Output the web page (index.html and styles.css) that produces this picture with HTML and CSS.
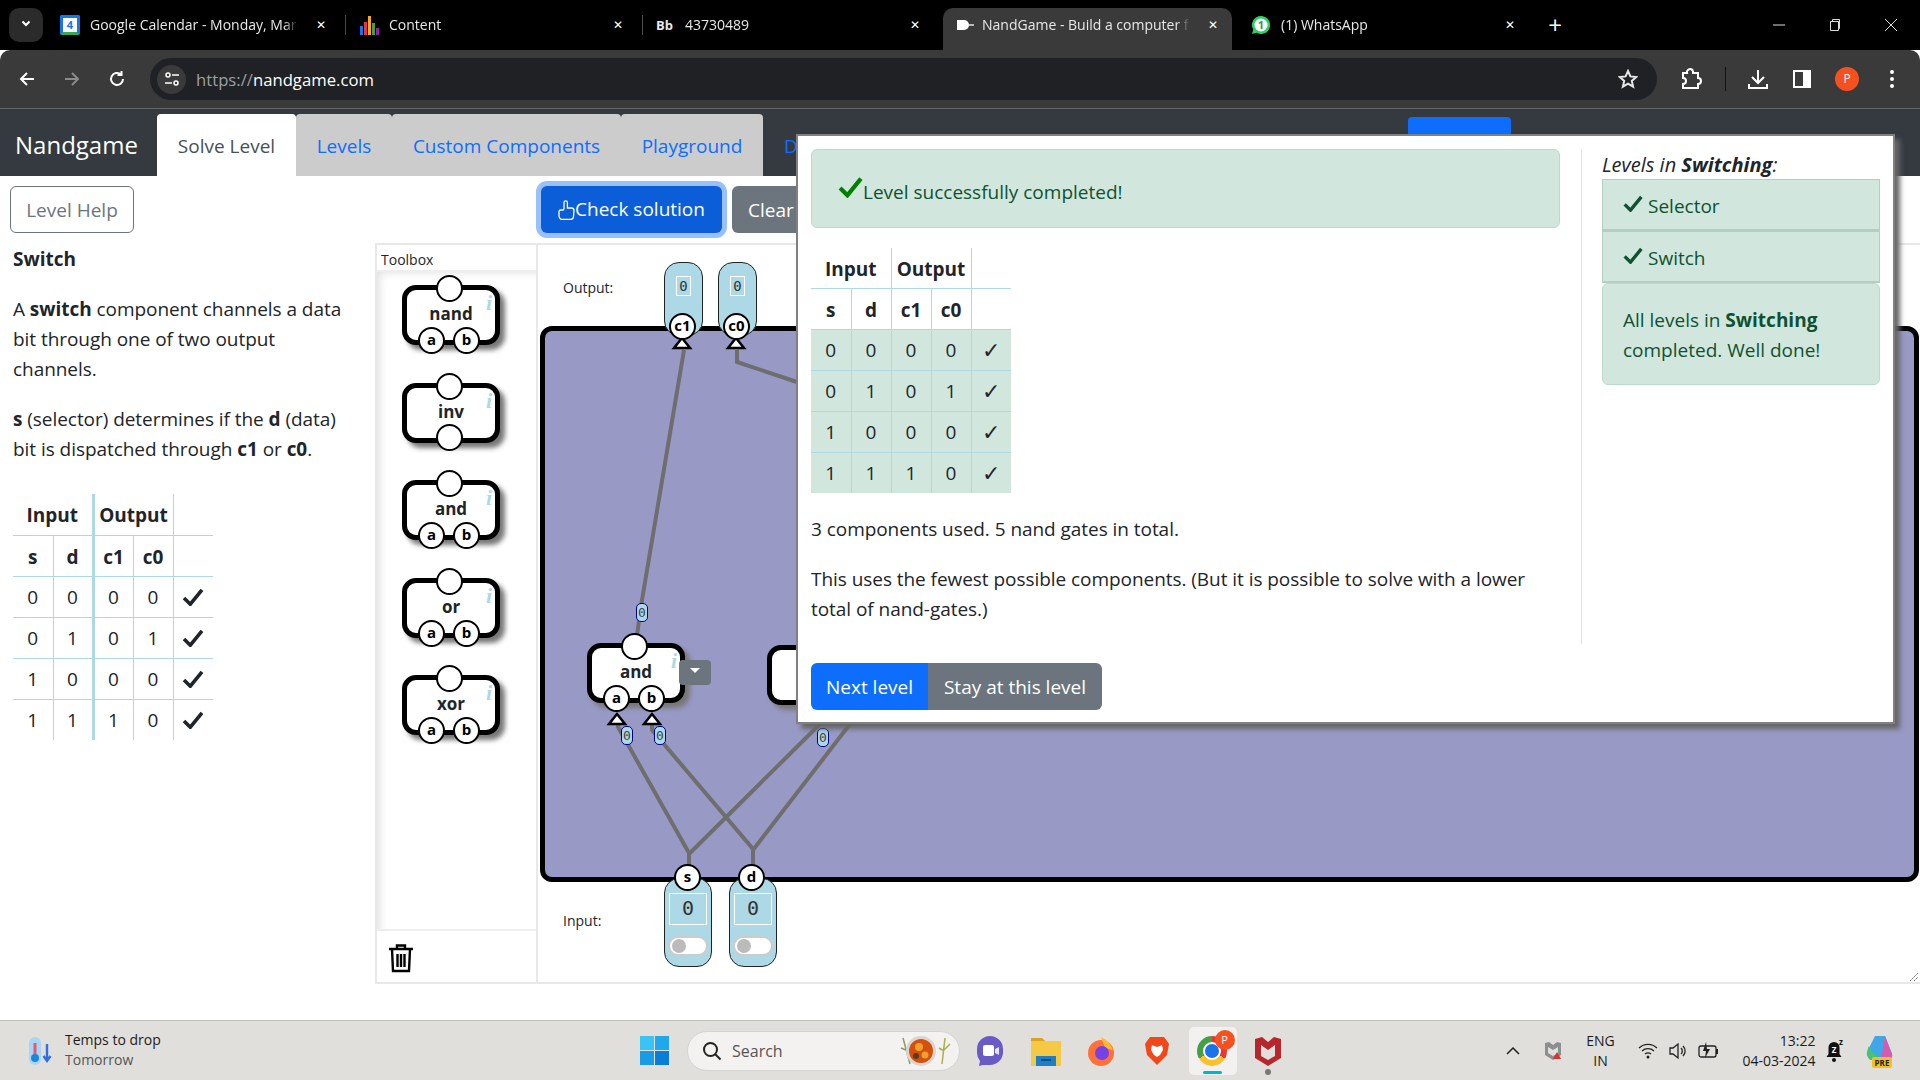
FILE: index.html
```html
<!DOCTYPE html>
<html lang="en">
<head>
    <meta charset="UTF-8">
    <title>NandGame - Build a computer from scratch</title>
    <link rel="stylesheet" href="styles.css">
</head>
<body>
<svg class="defs" width="0" height="0">
    <symbol id="tick" viewBox="0 0 24 20"><path d="M2 11l7 7L22 2" fill="none" stroke="currentColor" stroke-width="4"/></symbol>
</svg>

<div class="tabstrip">
    <button class="tab-menu"><svg width="14" height="14" viewBox="0 0 14 14"><path d="M3.5 5.5L7 9l3.5-3.5" fill="none" stroke="#fff" stroke-width="2"/></svg></button>
    <div class="tab">
        <span class="fav fav-cal">4</span><span class="tab-title">Google Calendar - Monday, March 4</span><span class="tab-x">✕</span>
    </div>
    <div class="tab sep">
        <svg class="fav" viewBox="0 0 20 20"><rect x="1" y="11" width="3" height="9" fill="#1a73e8"/><rect x="5" y="7" width="3" height="13" fill="#e53935"/><rect x="9" y="1" width="3" height="19" fill="#f9a825"/><rect x="13" y="8" width="3" height="12" fill="#43a047"/><rect x="17" y="13" width="3" height="7" fill="#8e24aa"/></svg>
        <span class="tab-title">Content</span><span class="tab-x">✕</span>
    </div>
    <div class="tab sep">
        <span class="fav fav-bb">Bb</span><span class="tab-title">43730489</span><span class="tab-x">✕</span>
    </div>
    <div class="tab active">
        <svg class="fav" viewBox="0 0 20 20"><path d="M2 5h7a5 5 0 010 10H2z" fill="#fff"/><path d="M14 10h5" stroke="#bbb" stroke-width="2"/></svg>
        <span class="tab-title">NandGame - Build a computer from scratch</span><span class="tab-x">✕</span>
    </div>
    <div class="tab last">
        <svg class="fav" viewBox="0 0 20 20"><path d="M10 1a9 9 0 00-7.700 13.600L1 19l4.600-1.200A9 9 0 1010 1z" fill="#25d366"/><circle cx="10" cy="10" r="6.500" fill="#fff"/><text x="10" y="14" text-anchor="middle" class="fav-num">1</text></svg>
        <span class="tab-title">(1) WhatsApp</span><span class="tab-x">✕</span>
    </div>
    <span class="newtab">+</span>
    <div class="winctl">
        <svg width="14" height="14" viewBox="0 0 14 14"><path d="M1 7h12" stroke="#ddd"/></svg>
        <svg width="14" height="14" viewBox="0 0 14 14"><path d="M2.500 3.500h8v9h-8zM4.500 3.500v-2h7v9h-1" fill="none" stroke="#ddd"/></svg>
        <svg width="14" height="14" viewBox="0 0 14 14"><path d="M1 1l12 12M13 1L1 13" stroke="#ddd"/></svg>
    </div>
</div>

<div class="toolbar">
    <svg class="tb-nav" viewBox="0 0 18 18"><path d="M16 9H3M9 3L3 9l6 6" fill="none" stroke="#fff" stroke-width="2"/></svg>
    <svg class="tb-nav" viewBox="0 0 18 18"><path d="M2 9h13M9 3l6 6-6 6" fill="none" stroke="#8a8a8a" stroke-width="2"/></svg>
    <svg class="tb-nav" viewBox="0 0 18 18"><path d="M15 9a6 6 0 11-2-4.500M13.500 1v4h-4" fill="none" stroke="#fff" stroke-width="2"/></svg>
    <div class="omnibox">
        <span class="site-info"><svg width="16" height="16" viewBox="0 0 16 16"><circle cx="4" cy="4" r="2" fill="none" stroke="#fff" stroke-width="1.500"/><path d="M8 4h7M1 12h7" stroke="#fff" stroke-width="1.500"/><circle cx="12" cy="12" r="2" fill="none" stroke="#fff" stroke-width="1.500"/></svg></span>
        <span class="url"><span class="url-scheme">https://</span>nandgame.com</span>
        <svg class="star" width="20" height="20" viewBox="0 0 20 20"><path d="M10 2l2.400 5.400 5.800.6-4.400 3.900 1.300 5.700L10 14.600l-5.100 3 1.300-5.700L1.800 8l5.800-.6z" fill="none" stroke="#e8e8e8" stroke-width="2"/></svg>
    </div>
    <div class="tb-right">
        <svg class="ext" width="22" height="24" viewBox="0 0 22 24"><path d="M3 6h4a3 3 0 016-1.500V6h5v5a3 3 0 010 6v4H3v-4a3 3 0 000-6z" fill="none" stroke="#fff" stroke-width="2"/></svg>
        <span class="tb-sep"></span>
        <svg class="dl" width="22" height="24" viewBox="0 0 22 24"><path d="M11 3v12M5 10l6 6 6-6M2 17v4h18v-4" fill="none" stroke="#fff" stroke-width="2"/></svg>
        <svg class="panel" width="18" height="18" viewBox="0 0 18 18"><rect x="1" y="1" width="16" height="16" fill="none" stroke="#fff" stroke-width="2"/><rect x="10" y="1" width="7" height="16" fill="#fff"/></svg>
        <span class="avatar">P</span>
        <svg class="kebab" width="6" height="20" viewBox="0 0 6 20"><circle cx="3" cy="3" r="2" fill="#fff"/><circle cx="3" cy="10" r="2" fill="#fff"/><circle cx="3" cy="17" r="2" fill="#fff"/></svg>
    </div>
</div>

<nav class="navbar">
    <a class="brand">Nandgame</a>
    <ul class="nav-tabs">
        <li class="nav-tab current solve">Solve Level</li>
        <li class="nav-tab levels">Levels</li>
        <li class="nav-tab custom">Custom Components</li>
        <li class="nav-tab play">Playground</li>
    </ul>
    <a class="nav-link">Donate</a>
    <span class="nav-blue"></span>
</nav>

<main class="page">
    <aside class="intro">
        <button class="btn btn-outline">Level Help</button>
        <h4>Switch</h4>
        <p>A <b>switch</b> component channels a data bit through one of two output channels.</p>
        <p><b>s</b> (selector) determines if the <b>d</b> (data) bit is dispatched through <b>c1</b> or <b>c0</b>.</p>
        <table class="truth truth-intro">
            <tr><th colspan="2">Input</th><th colspan="2" class="thick">Output</th><th class="blank"></th></tr>
            <tr><th>s</th><th>d</th><th class="thick">c1</th><th>c0</th><th></th></tr>
            <tr><td>0</td><td>0</td><td class="thick">0</td><td>0</td><td><svg class="tick"><use href="#tick"/></svg></td></tr>
            <tr><td>0</td><td>1</td><td class="thick">0</td><td>1</td><td><svg class="tick"><use href="#tick"/></svg></td></tr>
            <tr><td>1</td><td>0</td><td class="thick">0</td><td>0</td><td><svg class="tick"><use href="#tick"/></svg></td></tr>
            <tr><td>1</td><td>1</td><td class="thick">1</td><td>0</td><td><svg class="tick"><use href="#tick"/></svg></td></tr>
        </table>
    </aside>

    <section class="work">
        <div class="actions">
            <button class="btn btn-check">
                <svg width="17" height="20" viewBox="0 0 17 20"><path d="M1 11.500c0-1 1-1.500 2-1.500h2l1-1V2.500a1.700 1.700 0 013.400 0V8h4c1.500 0 2.600 1 2.600 2.500l-.5 6c-.1 1.800-1.500 3-3 3H5c-2.500 0-4-1.500-4-4z" fill="none" stroke="#fff" stroke-width="1.300"/></svg>Check solution
            </button>
            <button class="btn btn-clear">Clear</button>
        </div>

        <div class="workspace">
            <div class="toolbox">
                <div class="toolbox-head">Toolbox</div>
                <div class="toolbox-list">
                    <div class="gate"><span class="pin pin-top"></span><span class="gate-name">nand</span><i class="gate-info">i</i><span class="pin pin-a">a</span><span class="pin pin-b">b</span></div>
                    <div class="gate"><span class="pin pin-top"></span><span class="gate-name">inv</span><i class="gate-info">i</i><span class="pin pin-bottom"></span></div>
                    <div class="gate"><span class="pin pin-top"></span><span class="gate-name">and</span><i class="gate-info">i</i><span class="pin pin-a">a</span><span class="pin pin-b">b</span></div>
                    <div class="gate"><span class="pin pin-top"></span><span class="gate-name">or</span><i class="gate-info">i</i><span class="pin pin-a">a</span><span class="pin pin-b">b</span></div>
                    <div class="gate"><span class="pin pin-top"></span><span class="gate-name">xor</span><i class="gate-info">i</i><span class="pin pin-a">a</span><span class="pin pin-b">b</span></div>
                </div>
                <div class="toolbox-foot">
                    <svg width="26" height="30" viewBox="0 0 26 30"><path d="M1 6h24M9 5V2.500h8V5M4 6l1 22h16l1-22M9.500 11v13M13 11v13M16.500 11v13" fill="none" stroke="#000" stroke-width="2.400"/></svg>
                </div>
            </div>

            <div class="canvas">
                <span class="canvas-label label-output">Output:</span>
                <span class="canvas-label label-input">Input:</span>
                <div class="board"></div>

                <svg class="wires" viewBox="538 243 1382 741">
                    <g fill="none" stroke="#6e6e6e" stroke-width="4">
                        <path d="M684 350L640 612l-4 32"/>
                        <path d="M737 350v12l60 20"/>
                        <path d="M618 724v3l71 126v20"/>
                        <path d="M652 724v6l101 119v24"/>
                        <path d="M689 854L820 724"/>
                        <path d="M753 850L850 724"/>
                    </g>
                    <g fill="#fff" stroke="#000" stroke-width="2.500">
                        <path d="M682 338l8 10h-16z"/>
                        <path d="M736 338l8 10h-16z"/>
                        <path d="M617 714l8 10h-16z"/>
                        <path d="M652 714l8 10h-16z"/>
                    </g>
                </svg>

                <div class="capsule out-c1"><span class="value">0</span></div>
                <div class="capsule out-c0"><span class="value">0</span></div>
                <span class="pin board-pin at-c1">c1</span>
                <span class="pin board-pin at-c0">c0</span>

                <span class="pill pill-1">0</span>
                <span class="pill pill-2">0</span>
                <span class="pill pill-3">0</span>
                <span class="pill pill-4">0</span>

                <div class="gate gate-and"><span class="pin pin-top"></span><span class="gate-name">and</span><i class="gate-info">i</i><span class="pin pin-a">a</span><span class="pin pin-b">b</span></div>
                <button class="gate-menu"></button>
                <div class="gate gate-other"></div>

                <div class="capsule in-s"><span class="value">0</span><span class="toggle"></span></div>
                <div class="capsule in-d"><span class="value">0</span><span class="toggle"></span></div>
                <span class="pin board-pin at-s">s</span>
                <span class="pin board-pin at-d">d</span>

                <svg class="resize" width="10" height="10" viewBox="0 0 10 10"><path d="M1 9l8-8M5 9l4-4" stroke="#666" stroke-dasharray="2 1"/></svg>
            </div>
        </div>
    </section>
</main>

<div class="popup">
    <div class="popup-body">
        <div class="popup-main">
            <div class="alert alert-done"><svg class="done-tick"><use href="#tick"/></svg>Level successfully completed!</div>
            <table class="truth truth-result">
                <tr><th colspan="2">Input</th><th colspan="2">Output</th><th></th></tr>
                <tr><th>s</th><th>d</th><th>c1</th><th>c0</th><th></th></tr>
                <tr class="ok"><td>0</td><td>0</td><td>0</td><td>0</td><td class="mark">✓</td></tr>
                <tr class="ok"><td>0</td><td>1</td><td>0</td><td>1</td><td class="mark">✓</td></tr>
                <tr class="ok"><td>1</td><td>0</td><td>0</td><td>0</td><td class="mark">✓</td></tr>
                <tr class="ok"><td>1</td><td>1</td><td>1</td><td>0</td><td class="mark">✓</td></tr>
            </table>
            <p>3 components used. 5 nand gates in total.</p>
            <p>This uses the fewest possible components. (But it is possible to solve with a lower total of nand-gates.)</p>
        </div>
        <div class="popup-side">
            <div class="side-title"><i>Levels in <b>Switching</b>:</i></div>
            <ul class="level-list">
                <li><svg class="list-tick"><use href="#tick"/></svg>Selector</li>
                <li><svg class="list-tick"><use href="#tick"/></svg>Switch</li>
            </ul>
            <div class="alert alert-side">All levels in <b>Switching</b> completed. Well done!</div>
        </div>
    </div>
    <div class="btn-group">
        <button class="btn btn-next">Next level</button><button class="btn btn-stay">Stay at this level</button>
    </div>
</div>

<footer class="taskbar">
    <div class="weather">
        <svg width="24" height="30" viewBox="0 0 24 30"><rect x="1" y="1" width="12" height="28" rx="6" fill="#a9d6f5"/><rect x="5.500" y="7" width="3" height="14" fill="#e8576a"/><circle cx="7" cy="22" r="4" fill="#1e88d8"/><path d="M19 8v16M15.500 20l3.500 5 3.500-5" fill="none" stroke="#2f6fe0" stroke-width="2.400"/></svg>
        <div class="weather-text"><span>Temps to drop</span><span class="weather-sub">Tomorrow</span></div>
    </div>
    <svg class="winlogo" width="29" height="29" viewBox="0 0 29 29"><path d="M0 0h14v14H0z" fill="#3ac4f5"/><path d="M15 0h14v14H15z" fill="#1fa8ec"/><path d="M0 15h14v14H0z" fill="#1a9be6"/><path d="M15 15h14v14H15z" fill="#0a7ed6"/></svg>
    <div class="searchbox">
        <svg width="20" height="20" viewBox="0 0 20 20"><circle cx="8.500" cy="8.500" r="6.500" fill="none" stroke="#222" stroke-width="2"/><path d="M13 13l5.500 5.500" stroke="#222" stroke-width="2"/></svg>
        <span class="search-word">Search</span>
        <svg class="search-art" width="58" height="34" viewBox="0 0 58 34"><path d="M6 4l7 26M4 14l5 2M14 10l-3 6" stroke="#8d9a6a" stroke-width="1.500"/><circle cx="24" cy="17" r="15" fill="#d9d6d0"/><circle cx="24" cy="17" r="12" fill="#d3500f"/><circle cx="22" cy="13" r="4" fill="#f0a030"/><circle cx="28" cy="21" r="3.500" fill="#f0a030"/><circle cx="19" cy="22" r="3" fill="#5a3a20"/><path d="M48 4l-3 26M42 14l5 3M53 10l-6 6" stroke="#a8b050" stroke-width="1.500"/></svg>
    </div>
    <div class="tray-apps">
        <span class="app-slot"><svg width="28" height="32" viewBox="0 0 28 32"><path d="M14 1a13 13 0 0113 13v4a13 13 0 01-13 12H7l-4 1 1-5a13 13 0 01-3-8v-4A13 13 0 0114 1z" fill="#6a5ac6"/><rect x="7" y="10" width="11" height="11" rx="2" fill="#fff"/><path d="M19 14l4-2v8l-4-2z" fill="#e6e2fa"/></svg></span>
        <span class="app-slot"><svg width="30" height="30" viewBox="0 0 30 30"><path d="M0 2h11l3 3h16v25H0z" fill="#f6c945"/><path d="M0 2h11l3 3H0z" fill="#d9a520"/><rect x="5" y="20" width="20" height="10" fill="#1f7fc4"/><rect x="10" y="23" width="10" height="2" fill="#0b4f85"/></svg></span>
        <span class="app-slot"><svg width="28" height="30" viewBox="0 0 28 30"><circle cx="14" cy="17" r="13" fill="#ff7139"/><path d="M14 1c6 3 10 8 12 13l-8-2z" fill="#ffbd2e"/><circle cx="15" cy="17" r="7" fill="#7542e5"/></svg></span>
        <span class="app-slot"><svg width="26" height="30" viewBox="0 0 26 30"><path d="M6 1h14l3 4 2 3-2 11-10 10L3 19 1 8l2-3z" fill="#f1481b"/><path d="M8 9l5 2 5-2 1 5-3 5-3 2-3-2-3-5z" fill="#fff"/></svg></span>
        <span class="app-slot chrome-slot"><span class="chrome-ico"><span class="chrome-core"></span></span><span class="chrome-badge">P</span><span class="run-line"></span></span>
        <span class="app-slot"><svg width="26" height="30" viewBox="0 0 26 30"><path d="M0 3l7-2 6 5 6-5 7 2v19l-13 8-13-8z" fill="#b5272c"/><path d="M6 9l7 5 7-5v11l-7 4-7-4z" fill="#e0dfdc"/></svg><span class="run-dot"></span></span>
    </div>
    <div class="tray">
        <svg class="tray-chev" width="14" height="8" viewBox="0 0 14 8"><path d="M1 7l6-6 6 6" fill="none" stroke="#222" stroke-width="1.500"/></svg>
        <svg class="tray-shield" width="18" height="20" viewBox="0 0 18 20"><path d="M1 2l4-1 4 3 4-3 4 1v12l-8 5-8-5z" fill="#8b8f90"/><path d="M4 6l5 3 5-3v6l-5 3-5-3z" fill="#e0dfdc"/><path d="M13 11l4 7H9z" fill="#d93030"/></svg>
        <div class="tray-lang">ENG<br>IN</div>
        <svg class="tray-ico" width="20" height="20" viewBox="0 0 20 20"><path d="M1 7a13 13 0 0118 0M4 10a9 9 0 0112 0M7 13a5 5 0 016 0" fill="none" stroke="#222" stroke-width="1.300"/><circle cx="10" cy="16" r="1.500" fill="#222"/></svg>
        <svg class="tray-ico" width="20" height="20" viewBox="0 0 20 20"><path d="M2 7h3l5-4v14l-5-4H2z" fill="none" stroke="#222" stroke-width="1.300"/><path d="M13 7a4 4 0 010 6M15 5a7 7 0 010 10" fill="none" stroke="#222" stroke-width="1.300"/></svg>
        <svg class="tray-ico" width="22" height="20" viewBox="0 0 22 20"><rect x="1" y="5" width="17" height="11" rx="2" fill="none" stroke="#222" stroke-width="1.300"/><rect x="18" y="8" width="2" height="5" fill="#222"/><path d="M8 1L5 10h3l-1 7 5-9H9z" fill="#222"/></svg>
        <div class="tray-clock">13:22<br>04-03-2024</div>
        <svg class="tray-bell" width="18" height="24" viewBox="0 0 18 24"><path d="M8 3a5.500 5.500 0 015.500 5.500V15l2 3H.5l2-3V8.500A5.500 5.500 0 018 3z" fill="#111"/><circle cx="8" cy="21" r="2" fill="#111"/><text x="8" y="14" text-anchor="middle" class="bell-z bell-z-in">Z</text><text x="15" y="6" text-anchor="middle" class="bell-z">z</text></svg>
        <svg class="tray-copilot" width="30" height="34" viewBox="0 0 30 34"><path d="M11 2h10l7 18c1 4-2 6-5 6H10C5 26 2 22 3 18z" fill="#3fa7e8"/><path d="M21 2l7 18c1 4-2 6-5 6h-6z" fill="#d65bb0"/><path d="M6 26C2 22 3 16 5 12c2 6 6 8 12 14z" fill="#48c07a"/><rect x="8" y="23" width="20" height="11" rx="2" fill="#f4c020"/><text x="18" y="32" text-anchor="middle" class="pre">PRE</text></svg>
    </div>
</footer>
</body>
</html>
```

FILE: styles.css
```css
* {
    box-sizing: border-box;
}
html, body {
    margin: 0;
    padding: 0;
}
body {
    width: 1920px;
    height: 1080px;
    overflow: hidden;
    position: relative;
    display: flex;
    flex-direction: column;
    font-family: "Open Sans", "Noto Sans", sans-serif;
    font-size: 19px;
    line-height: 30px;
    color: #212529;
    background-color: #fff;
}
.defs {
    position: absolute;
}
ul {
    list-style: none;
    margin: 0;
    padding: 0;
}
button {
    font: inherit;
}

/* browser tabs */
.tabstrip {
    flex: 0 0 50px;
    display: flex;
    align-items: flex-end;
    background-color: #000;
    color: #e8e8e8;
    font-size: 14px;
}
.tab-menu {
    flex: 0 0 34px;
    height: 34px;
    margin: 0 5px 8px 9px;
    padding: 0;
    border: none;
    border-radius: 10px;
    background-color: #2b2b2b;
}
.tab {
    flex: 0 0 297px;
    min-width: 0;
    height: 42px;
    padding: 0 17px 8px 12px;
    display: flex;
    align-items: center;
    position: relative;
}
.tab.sep {
    padding-left: 14px;
}
.tab.sep::before {
    content: "";
    position: absolute;
    left: 0;
    top: 7px;
    height: 20px;
    border-left: 1px solid #4a4a4a;
}
.tab.active {
    flex-basis: 289px;
    margin-left: 4px;
    padding-right: 12px;
    background-color: #3a3a3a;
    border-radius: 10px 10px 0 0;
}
.tab.last {
    flex-basis: 302px;
    padding-left: 19px;
    padding-right: 17px;
}
.fav {
    flex: 0 0 20px;
    width: 20px;
    height: 20px;
    margin-right: 10px;
}
.tab.active .fav {
    margin-right: 7px;
}
.fav-cal {
    background-color: #fff;
    border: 3px solid #1a73e8;
    border-bottom-color: #34a853;
    color: #1a73e8;
    font-size: 11px;
    font-weight: 700;
    line-height: 14px;
    text-align: center;
    border-radius: 2px;
}
.fav-bb {
    flex-basis: 19px;
    margin-right: 10px;
    font-size: 13px;
    font-weight: 700;
    line-height: 20px;
}
.fav-num {
    font: 700 11px "Open Sans", sans-serif;
    fill: #25a050;
}
.tab-title {
    flex: 1;
    min-width: 0;
    white-space: nowrap;
    overflow: hidden;
    -webkit-mask-image: linear-gradient(to left, transparent 0, #000 14px);
}
.tab-x {
    flex: 0 0 14px;
    margin-left: 16px;
    font-family: "DejaVu Sans", sans-serif;
    font-size: 12px;
    color: #fff;
    text-align: center;
}
.newtab {
    margin: 0 0 8px 12px;
    width: 18px;
    font-size: 24px;
    line-height: 34px;
    color: #fff;
    text-align: center;
}
.winctl {
    margin-left: auto;
    height: 42px;
    padding: 0 22px 9px 0;
    display: flex;
    align-items: center;
    gap: 42px;
}

/* browser toolbar */
.toolbar {
    flex: 0 0 58px;
    display: flex;
    align-items: center;
    padding-left: 18px;
    background-color: #3a3a3a;
    border-radius: 10px 10px 0 0;
}
.tb-nav {
    width: 18px;
    height: 18px;
    margin-right: 27px;
}
.tb-nav:nth-child(3) {
    margin-right: 24px;
}
.omnibox {
    flex: 0 0 1507px;
    height: 42px;
    display: flex;
    align-items: center;
    padding: 0 19px 0 7px;
    border-radius: 21px;
    background-color: #202124;
}
.site-info {
    flex: 0 0 29px;
    height: 29px;
    margin-right: 10px;
    display: flex;
    align-items: center;
    justify-content: center;
    border-radius: 50%;
    background-color: #3a3a3a;
}
.url {
    font-size: 16.700px;
    padding-top: 2px;
    color: #fff;
}
.url-scheme {
    color: #9aa0a6;
}
.star {
    margin-left: auto;
}
.tb-right {
    flex: 1;
    display: flex;
    align-items: center;
    padding-left: 23px;
}
.tb-sep {
    height: 24px;
    margin: 0 21px 0 23px;
    border-left: 1px solid #111;
}
.panel {
    margin-left: 24px;
}
.avatar {
    flex: 0 0 24px;
    height: 24px;
    margin-left: 24px;
    border-radius: 50%;
    background-color: #f4511e;
    color: #fff;
    font-size: 12px;
    line-height: 24px;
    text-align: center;
}
.kebab {
    margin-left: 30px;
}

/* nandgame navbar */
.navbar {
    flex: 0 0 68px;
    display: flex;
    align-items: flex-end;
    border-top: 1px solid #666;
    background-color: #343a40;
}
.brand {
    flex: 0 0 157px;
    padding-left: 15px;
    height: 62px;
    color: #fff;
    font-size: 24px;
    line-height: 62px;
}
.nav-tabs {
    display: flex;
}
.nav-tab {
    height: 62px;
    line-height: 64px;
    text-align: center;
    color: #0d6efd;
    background-color: #ccc;
    border-radius: 4px 4px 0 0;
}
.nav-tab.current {
    color: #495057;
    background-color: #fff;
}
.solve { width: 139px; }
.levels { width: 96px; }
.custom { width: 229px; }
.play { width: 142px; }
.nav-link {
    height: 62px;
    margin-left: 21px;
    width: 60px;
    line-height: 64px;
    color: #0d6efd;
    overflow: hidden;
}
.nav-blue {
    align-self: flex-start;
    margin: 8px 0 0 564px;
    width: 103px;
    height: 40px;
    border-radius: 4px 4px 0 0;
    background-color: #0d6efd;
}

/* main page */
.page {
    flex: 1;
    display: flex;
    min-height: 0;
}
.intro {
    flex: 0 0 375px;
    padding: 10px 0 0 10px;
}
.btn {
    height: 47px;
    padding: 1px 15px 0;
    border: 1px solid transparent;
    border-radius: 6px;
    color: #fff;
    white-space: nowrap;
    line-height: 1;
}
.btn-outline {
    width: 124px;
    border-color: #6c757d;
    background-color: #fff;
    color: #6c757d;
}
.intro h4 {
    margin: 11px 0 0 3px;
    font-size: 19px;
    font-weight: 700;
    line-height: 30px;
}
.intro p {
    margin: 20px 0 0 3px;
    width: 340px;
    letter-spacing: -0.050px;
}
.truth {
    border-collapse: collapse;
    border-style: hidden;
    table-layout: fixed;
    text-align: center;
}
.truth th, .truth td {
    width: 40px;
    height: 41px;
    padding: 0;
    border: 1px solid #add8e6;
}
.truth th {
    padding-top: 2px;
}
.truth-intro {
    margin: 30px 0 0 3px;
}
.truth .thick {
    border-left: 3px solid #add8e6;
}
.truth .blank {
    border-bottom: none;
}
.tick {
    display: block;
    width: 22px;
    height: 18px;
    margin: 0 auto;
    color: #212529;
}
.work {
    flex: 1;
    display: flex;
    flex-direction: column;
    min-width: 0;
}
.actions {
    flex: 0 0 67px;
    display: flex;
    align-items: flex-start;
    padding: 10px 0 0 166px;
    gap: 10px;
}
.btn-check {
    width: 181px;
    padding: 0;
    display: flex;
    align-items: center;
    justify-content: center;
    background-color: #0b5ed7;
    box-shadow: 0 0 0 5px #98c0fe;
}
.btn-clear {
    background-color: #6c757d;
    text-align: left;
}
.workspace {
    flex: 0 0 741px;
    display: flex;
    border-top: 2px solid #e8e8e8;
    border-bottom: 2px solid #e8e8e8;
}

/* toolbox */
.toolbox {
    flex: 0 0 163px;
    display: flex;
    flex-direction: column;
    border-left: 2px solid #e8e8e8;
    border-right: 2px solid #e8e8e8;
}
.toolbox-head {
    flex: 0 0 27px;
    padding: 5px 0 0 4px;
    border-bottom: 2px solid #eee;
    font-size: 14px;
    line-height: 20px;
}
.toolbox-list {
    flex: 1;
    display: flex;
    flex-direction: column;
    gap: 37.500px;
    padding: 13px 0 0 25px;
    box-shadow: inset 8px 6px 10px -6px #ddd;
}
.toolbox-foot {
    flex: 0 0 53px;
    padding: 12px 0 0 11px;
    border-top: 2px solid #eee;
}
.gate {
    flex: 0 0 60px;
    width: 98px;
    height: 60px;
    position: relative;
    border: 5px solid #000;
    border-radius: 14px;
    background-color: #fff;
    box-shadow: 5px 5px 5px #777;
    font-weight: 700;
    text-align: center;
}
.gate-name {
    position: absolute;
    left: 0;
    right: 0;
    top: 12px;
    font-size: 17px;
    line-height: 24px;
}
.gate-info {
    position: absolute;
    right: 3px;
    top: 1px;
    font-family: "Liberation Serif", serif;
    font-size: 22px;
    line-height: 24px;
    color: #add8e6;
}
.pin {
    position: absolute;
    width: 27px;
    height: 27px;
    border: 2.500px solid #000;
    border-radius: 50%;
    background-color: #fff;
    font-family: "Open Sans", sans-serif;
    font-size: 15px;
    font-weight: 700;
    line-height: 21px;
    text-align: center;
    color: #000;
}
.pin-top {
    left: 29px;
    top: -15px;
}
.pin-bottom {
    left: 29px;
    bottom: -13px;
}
.pin-a {
    left: 11px;
    bottom: -14px;
}
.pin-b {
    left: 46px;
    bottom: -14px;
}

/* canvas, page x = 538 + left, page y = 245 + top */
.canvas {
    flex: 1;
    position: relative;
    overflow: hidden;
}
.canvas-label {
    position: absolute;
    left: 25px;
    font-size: 14px;
    line-height: 20px;
}
.label-output { top: 33px; }
.label-input { top: 666px; }
.board {
    position: absolute;
    left: 2px;
    top: 81px;
    width: 1379px;
    height: 556px;
    border: 5px solid #000;
    border-radius: 12px;
    background-color: #9999c6;
}
.wires {
    position: absolute;
    left: 0;
    top: -2px;
    width: 1382px;
    height: 741px;
}
.capsule {
    position: absolute;
    border: 1px solid #222;
    background-color: #add8e6;
    border-radius: 15px;
    display: flex;
    flex-direction: column;
    align-items: center;
}
.out-c1, .out-c0 {
    top: 17px;
    width: 39px;
    height: 74px;
    padding-top: 13px;
}
.out-c1 { left: 126px; }
.out-c0 { left: 180px; }
.in-s, .in-d {
    top: 633px;
    width: 48px;
    height: 89px;
    padding-top: 14px;
}
.in-s { left: 126px; }
.in-d { left: 191px; }
.value {
    width: 15px;
    height: 20px;
    border: 1px solid #fff;
    font-family: "DejaVu Sans Mono", monospace;
    font-size: 14px;
    line-height: 18px;
    text-align: center;
    color: #333;
}
.in-s .value, .in-d .value {
    width: 38px;
    height: 32px;
    font-size: 20px;
    line-height: 29px;
}
.toggle {
    width: 40px;
    height: 20px;
    margin-top: 11px;
    position: relative;
    border: 2px solid #ccc;
    border-radius: 10px;
    background-color: #fff;
}
.toggle::before {
    content: "";
    position: absolute;
    left: 2px;
    top: 1px;
    width: 14px;
    height: 14px;
    border-radius: 50%;
    background-color: #bbb;
}
.board-pin {
    z-index: 2;
}
.at-c1 { left: 131px; top: 68px; }
.at-c0 { left: 185px; top: 68px; }
.at-s { left: 136px; top: 619px; }
.at-d { left: 200px; top: 619px; }
.pill {
    position: absolute;
    width: 12px;
    height: 19px;
    border: 1px solid #00008b;
    border-radius: 5px;
    background-color: #add8e6;
    font-family: "DejaVu Sans Mono", monospace;
    font-size: 13px;
    line-height: 17px;
    text-align: center;
    color: #444;
}
.pill-1 { left: 98px; top: 358px; }
.pill-2 { left: 83px; top: 481px; }
.pill-3 { left: 116px; top: 481px; }
.pill-4 { left: 279px; top: 483px; }
.gate-and {
    position: absolute;
    left: 49px;
    top: 398px;
}
.gate-menu {
    position: absolute;
    left: 141px;
    top: 415px;
    width: 32px;
    height: 25px;
    padding: 0;
    border: none;
    border-radius: 4px;
    background-color: #6c757d;
}
.gate-menu::before {
    content: "";
    position: absolute;
    left: 11px;
    top: 8px;
    border: 5px solid transparent;
    border-top-color: #fff;
}
.gate-other {
    position: absolute;
    left: 229px;
    top: 400px;
}
.resize {
    position: absolute;
    right: 1px;
    bottom: 0;
}

/* completed popup */
.popup {
    position: absolute;
    left: 796px;
    top: 134px;
    width: 1099px;
    height: 590px;
    padding: 13px 13px 0;
    border: 2px solid #808080;
    background-color: #fff;
    box-shadow: 5px 5px 5px #666;
}
.popup-body {
    height: 495px;
    display: flex;
}
.popup-main {
    flex: 0 0 771px;
    padding-right: 21px;
    border-right: 1px solid #dee2e6;
}
.popup-main p {
    margin: 20px 0 0;
    letter-spacing: -0.050px;
}
.truth-result + p {
    margin-top: 21px;
}
.alert {
    border: 1px solid #badbcc;
    border-radius: 6px;
    background-color: #d1e7dd;
    color: #0f5132;
}
.alert-done {
    height: 79px;
    padding: 27px 0 0 26px;
    display: flex;
    align-items: flex-start;
}
.done-tick {
    width: 25px;
    height: 22px;
    margin: -1px 0 0;
    color: #008000;
}
.truth-result {
    margin: 20px 0 0;
}
.truth-result tr:first-child th {
    height: 40px;
}
.ok td {
    background-color: #d1e7dd;
}
.truth .mark {
    padding-top: 3px;
    font-family: "DejaVu Sans", sans-serif;
    font-size: 22px;
}
.popup-side {
    flex: 1;
    padding: 2px 0 0 20px;
}
.side-title {
    height: 28px;
    font-size: 20px;
    line-height: 28px;
}
.level-list li {
    height: 52px;
    padding: 2px 0 0 20px;
    display: flex;
    align-items: center;
    border: 1px solid #b4cec4;
    border-bottom-width: 2px;
    background-color: #d1e7dd;
    color: #0f5132;
}
.list-tick {
    width: 20px;
    height: 17px;
    margin: -4px 5px 0 0;
    color: #0f5132;
}
.alert-side {
    height: 102px;
    padding: 21px 20px 0;
}
.btn-group {
    display: flex;
    margin-top: 19px;
}
.btn-next {
    width: 117px;
    padding: 2px 0 0;
    border-radius: 6px 0 0 6px;
    background-color: #0d6efd;
}
.btn-stay {
    width: 174px;
    padding: 2px 0 0;
    border-radius: 0 6px 6px 0;
    background-color: #6c757d;
}

/* windows taskbar */
.taskbar {
    flex: 0 0 60px;
    display: flex;
    align-items: center;
    border-top: 1px solid #bdbdbb;
    background-color: #e0dfdc;
    font-size: 14px;
    line-height: 20px;
    color: #1c1c1c;
}
.weather {
    flex: 0 0 640px;
    display: flex;
    align-items: center;
    padding-left: 28px;
    gap: 13px;
}
.weather-text {
    display: flex;
    flex-direction: column;
    margin-top: -2px;
}
.weather-sub {
    color: #555;
}
.winlogo {
    flex: 0 0 29px;
}
.searchbox {
    flex: 0 0 273px;
    height: 40px;
    margin-left: 18px;
    display: flex;
    align-items: center;
    padding-left: 14px;
    border: 1px solid #d4d4d2;
    border-radius: 20px;
    background-color: #f3f2f0;
}
.search-word {
    margin-left: 10px;
    font-size: 16px;
    color: #555;
}
.search-art {
    margin-left: auto;
    margin-right: 4px;
}
.tray-apps {
    display: flex;
    margin-left: 2.500px;
}
.app-slot {
    flex: 0 0 55.500px;
    height: 48px;
    position: relative;
    display: flex;
    align-items: center;
    justify-content: center;
}
.chrome-slot::before {
    content: "";
    position: absolute;
    left: 4px;
    top: 0;
    width: 48px;
    height: 48px;
    border-radius: 5px;
    background-color: #f2f1ef;
}
.chrome-ico {
    position: relative;
    width: 30px;
    height: 30px;
    border-radius: 50%;
    background: conic-gradient(#e53935 0 120deg, #fbc02d 120deg 240deg, #43a047 240deg 360deg);
    display: flex;
    align-items: center;
    justify-content: center;
}
.chrome-core {
    width: 14px;
    height: 14px;
    border: 2px solid #fff;
    border-radius: 50%;
    background-color: #1a73e8;
    box-sizing: content-box;
}
.chrome-badge {
    position: absolute;
    left: 30px;
    top: 3px;
    width: 20px;
    height: 20px;
    border-radius: 50%;
    background-color: #f4511e;
    color: #fff;
    font-size: 11px;
    line-height: 20px;
    text-align: center;
}
.run-line {
    position: absolute;
    left: 18px;
    bottom: 1px;
    width: 19px;
    height: 3px;
    border-radius: 2px;
    background-color: #00b7c3;
}
.run-dot {
    position: absolute;
    left: 25px;
    bottom: 0;
    width: 6px;
    height: 6px;
    border-radius: 50%;
    background-color: #777;
}
.tray {
    flex: 1;
    display: flex;
    align-items: center;
    padding-left: 200px;
}
.tray-chev { margin-left: 10px; }
.tray-shield { margin-left: 24px; }
.tray-lang {
    margin-left: 20px;
    width: 38px;
    text-align: center;
    font-size: 14px;
}
.tray-ico { margin-left: 10px; }
.tray-lang + .tray-ico { margin-left: 18px; }
.tray-clock {
    width: 90px;
    margin-left: 6px;
    text-align: right;
}
.tray-bell { margin-left: 10px; }
.tray-copilot { margin-left: 20px; }
.bell-z {
    font: 700 8px "Open Sans", sans-serif;
    fill: #111;
}
.bell-z-in {
    fill: #fff;
}
.pre {
    font: 700 8px "Open Sans", sans-serif;
    fill: #222;
}
```
